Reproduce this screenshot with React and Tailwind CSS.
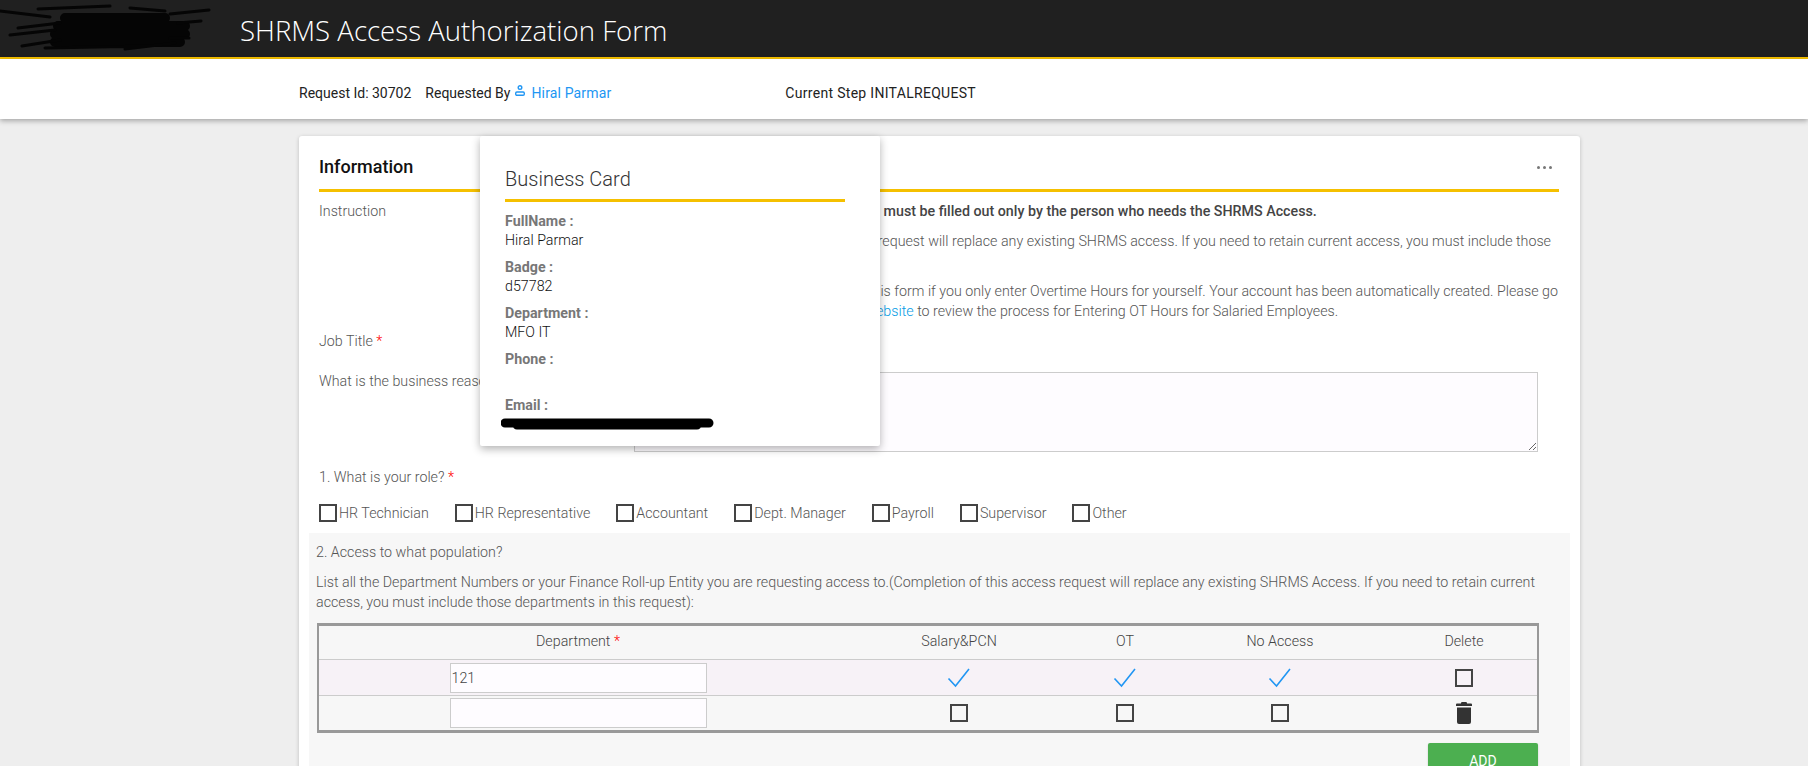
const Check = () => (
  <svg width="24" height="20" viewBox="0 0 24 20" fill="none" className="block">
    <path d="M1.5 10.5 L8.5 18 L22 1" stroke="#2196f3" strokeWidth="1.6" />
  </svg>
);
const Box = () => <span className="block w-[18px] h-[18px] border-2 border-[#444] bg-transparent" />;
const Trash = () => (
  <svg width="16" height="22" viewBox="0 0 16 22" className="block">
    <path d="M5.5 0h5l.6 1.4H15a1 1 0 0 1 1 1V4H0V2.400a1 1 0 0 1 1-1h3.900z" fill="#333" />
    <path d="M1 5.500h14V20a2 2 0 0 1-2 2H3a2 2 0 0 1-2-2z" fill="#333" />
  </svg>
);
const Req = () => <span className="text-[#f00]"> *</span>;

const roles = ["HR Technician", "HR Representative", "Accountant", "Dept. Manager", "Payroll", "Supervisor", "Other"];
const cardRows = [
  ["FullName :", "Hiral Parmar"],
  ["Badge :", "d57782"],
  ["Department :", "MFO IT"],
  ["Phone :", ""],
];

export default function App() {
  return (
    <div className="h-[766px] overflow-hidden bg-[#eeeeee] font-['Roboto',sans-serif] text-[14.25px] leading-[20px] font-light text-[#555]">
      <header className="h-[59px] bg-[#202020] border-b-2 border-[#f5c000] flex items-center relative">
        <svg width="215" height="57" viewBox="0 0 215 57" className="shrink-0 self-start">
          <g fill="none" stroke="#050505" strokeLinecap="round" strokeLinejoin="round">
            <path d="M65 18 H165 M58 26 H185 M55 34 H185 M55 42 H180" strokeWidth="10" />
            <path d="M38 9 L110 6 M130 8 L165 11 M45 48 L150 46 M125 49 L175 43" strokeWidth="3" />
            <path d="M0 11 L50 17 M170 14 L209 10 M178 23 L201 21 M18 28 L60 23 M10 35 L55 30 M22 46 L60 40 M170 38 L189 38" strokeWidth="3" />
          </g>
        </svg>
        <h1 className="ml-[25px] mt-[3px] font-['Open_Sans',sans-serif] font-light text-[27.6px] leading-[32px] text-white">SHRMS Access Authorization Form</h1>
      </header>

      <div className="h-[60px] bg-white shadow-[0_2px_5px_rgba(0,0,0,0.3)] flex items-center pl-[299px] pt-[7px] font-normal text-[14px] text-[#222] relative">
        <span>Request Id: 30702</span>
        <span className="ml-[14px]">Requested By</span>
        <svg width="10" height="11" viewBox="0 0 10 11" fill="none" stroke="#2196f3" strokeWidth="1.400" className="ml-[5px] mb-[5px]">
          <circle cx="5" cy="2.600" r="1.800" />
          <rect x="0.700" y="7" width="8.600" height="3.300" rx="1.200" />
        </svg>
        <span className="ml-[6px] tracking-[0.15px] text-[#2196f3]">Hiral Parmar</span>
        <span className="ml-[174px] tracking-[0.3px]">Current Step INITALREQUEST</span>
      </div>

      <main className="pt-[17px] pl-[299px]">
        <div className="relative w-[1281px] h-[700px] bg-white rounded-[3px] shadow-[0_1px_4px_rgba(0,0,0,0.2)]">
          <div className="ml-5 mr-[21px] h-[56px] border-b-[3px] border-[#f5c000] flex items-end justify-between pb-[11px]">
            <span className="text-[18px] leading-[22px] font-medium text-[#111]">Information</span>
            <span className="flex gap-[3px] mb-[9px] mr-[7px]">
              <i className="block w-[3px] h-[3px] rounded-full bg-[#777]" />
              <i className="block w-[3px] h-[3px] rounded-full bg-[#777]" />
              <i className="block w-[3px] h-[3px] rounded-full bg-[#777]" />
            </span>
          </div>

          <div className="mx-5 flex pt-[9px]">
            <div className="w-[315px] shrink-0">Instruction</div>
            <div className="flex-1 min-w-0 whitespace-nowrap">
              <p className="font-medium text-[#444] mb-[10px]">This Full SHRMS Access Authorization must be filled out only by the person who needs the SHRMS Access.</p>
              <p className="mb-[10px]">Please note that the completion of this request will replace any existing SHRMS access. If you need to retain current access, you must include those<br />departments in this request.</p>
              <p><span className="tracking-[-0.05px]">You do not need to fill out and submit</span> this form if you only enter Overtime Hours for yourself. Your account has been automatically created. Please go<br />to the SHRMS Payroll Training Team, <span className="text-[#039be5]">website</span> to review the process for Entering OT Hours for Salaried Employees.</p>
            </div>
          </div>

          <div className="mx-5 mt-[10px]">Job Title<Req /></div>

          <div className="mx-5 mt-[20px] flex">
            <div className="w-[315px] shrink-0">What is the business reason<Req /></div>
            <textarea className="mt-[1px] w-[904px] h-[80px] bg-[#fefcff] border border-[#ccc] resize-y outline-none" />
          </div>

          <div className="ml-5 mt-[15px]">1. What is your role?<Req /></div>

          <div className="ml-5 mt-[17px] flex items-center gap-[26px] h-[18px]">
            {roles.map((r) => (
              <label key={r} className="flex items-center gap-[2px]">
                <Box />
                <span>{r}</span>
              </label>
            ))}
          </div>

          <section className="mx-[10px] mt-[11px] h-[240px] bg-[#f7f7f7] pt-[9px] pl-[7px] pr-[32px]">
            <div>2. Access to what population?</div>
            <p className="mt-[10px]">List all the Department Numbers or your Finance Roll-up Entity you are requesting access to.(Completion of this access request will replace any existing SHRMS Access. If you need to retain current access, you must include those departments in this request):</p>

            <div className="mt-[11px] ml-[1px] w-[1222px] border-2 border-t-[3px] border-b-[3px] border-[#999] text-[#444]">
              <div className="grid grid-cols-[518px_244px_88px_222px_1fr] items-center h-[33px] text-center">
                <div className="-mt-[4px]">Department<Req /></div>
                <div className="-mt-[4px]">Salary&amp;PCN</div>
                <div className="-mt-[4px]">OT</div>
                <div className="-mt-[4px]">No Access</div>
                <div className="-mt-[4px]">Delete</div>
              </div>
              <div className="grid grid-cols-[518px_244px_88px_222px_1fr] items-center justify-items-center h-[36px] bg-[#f7f2f7] border-t border-[#ccc]">
                <input readOnly value="121" className="w-[257px] h-[30px] bg-[#fefcff] border border-[#ccc] outline-none px-[1px] text-[#444]" />
                <Check />
                <Check />
                <Check />
                <Box />
              </div>
              <div className="grid grid-cols-[518px_244px_88px_222px_1fr] items-center justify-items-center h-[35px] border-t border-[#ccc]">
                <input readOnly value="" className="w-[257px] h-[30px] bg-[#fefcff] border border-[#ccc] outline-none" />
                <Box />
                <Box />
                <Box />
                <Trash />
              </div>
            </div>

            <div className="mt-[10px] flex justify-end">
              <button className="w-[110px] h-[36px] bg-[#4caf50] rounded-[2px] text-white font-normal text-[14px] uppercase shadow-[0_1px_2px_rgba(0,0,0,0.2)]">Add</button>
            </div>
          </section>

          <aside className="absolute left-[181px] top-0 w-[400px] h-[310px] bg-white rounded-[2px] shadow-[0_3px_8px_rgba(0,0,0,0.3)] px-[25px] pt-[31px]">
            <h2 className="text-[20px] leading-[24px] font-light text-[#333] h-[32px]">Business Card</h2>
            <div className="w-[340px] border-t-[3px] border-[#f5c000] pt-[9px]">
              {cardRows.map(([k, v]) => (
                <div key={k} className="h-[46px]">
                  <div className="font-bold text-[#777]">{k}</div>
                  <div className="font-light text-[#111] -mt-[1px]">{v}</div>
                </div>
              ))}
              <div className="font-bold text-[#777]">Email :</div>
              <svg width="214" height="14" viewBox="0 0 214 14" className="-ml-[4px] mt-[2px] block">
                <path d="M4 6 H208 M16 8 H196" fill="none" stroke="#000" strokeWidth="9" strokeLinecap="round" />
              </svg>
            </div>
          </aside>
        </div>
      </main>
    </div>
  );
}
